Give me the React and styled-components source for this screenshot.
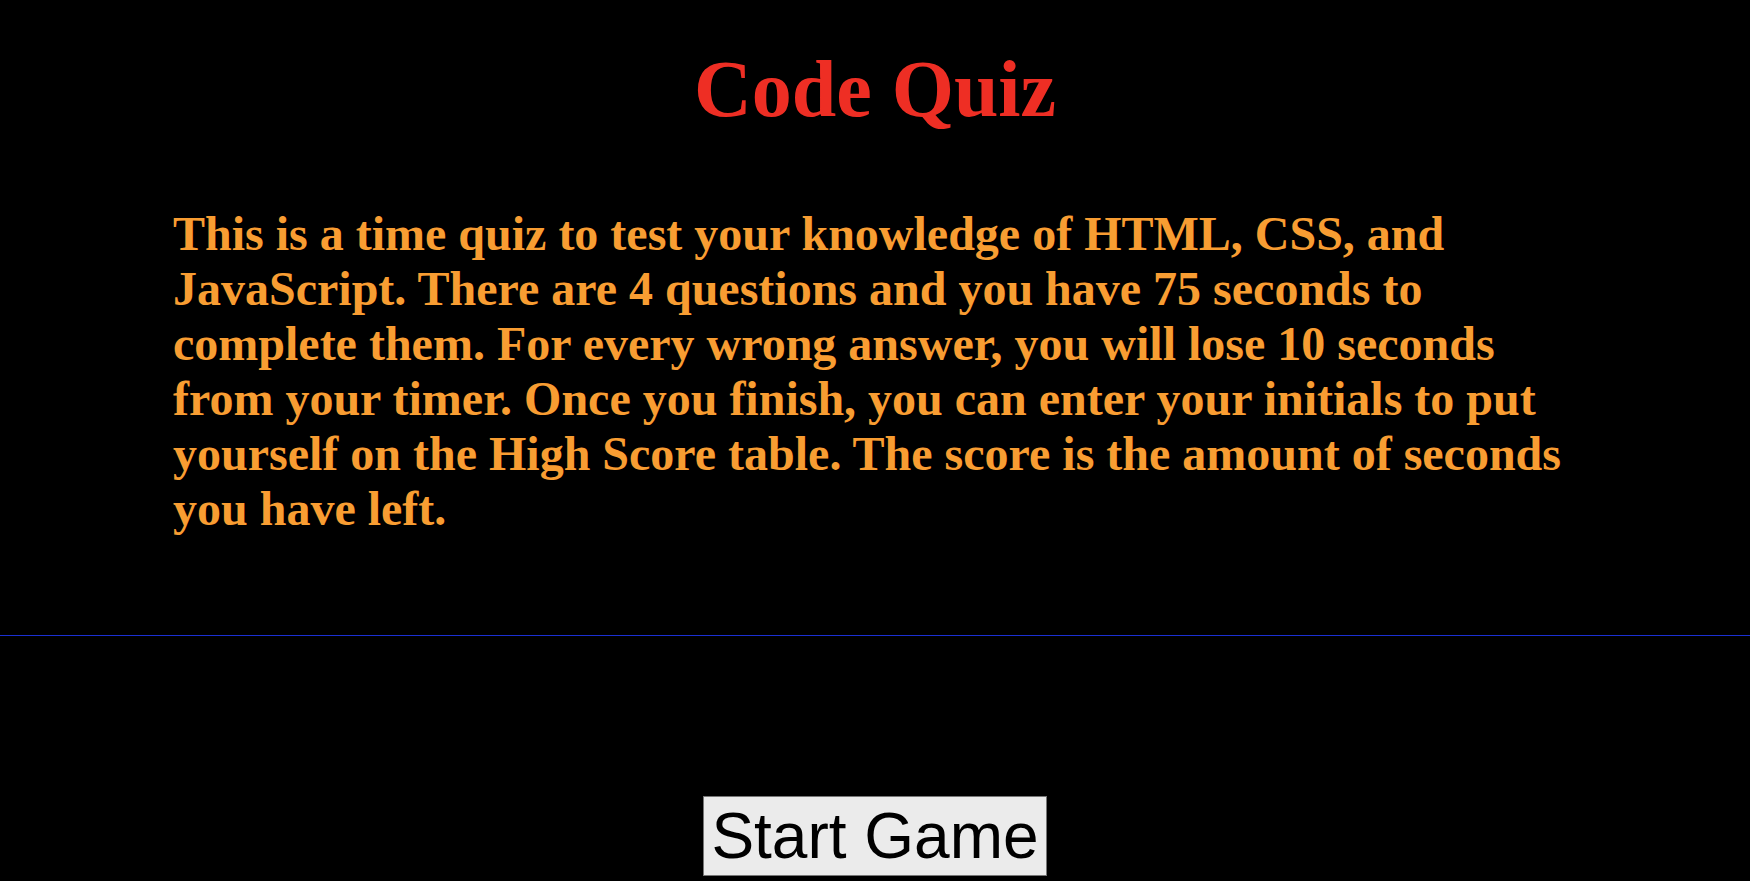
import React from 'react';
import styled, { createGlobalStyle } from 'styled-components';

const GlobalStyle = createGlobalStyle`
  html,
  body {
    margin: 0;
    padding: 0;
    background: #000;
  }

  body {
    font-family: 'Liberation Serif', 'Times New Roman', serif;
  }
`;

// Styled components
const Page = styled.div`
  min-height: 881px;
  background: #000;
  display: flex;
  flex-direction: column;
`;

const Intro = styled.header`
  border-bottom: 1px solid #1b30d2;
  padding: 44px 173px 99px;
  display: flex;
  flex-direction: column;
`;

const Title = styled.h1`
  margin: 0;
  color: #ee2e24;
  font-size: 80px;
  font-weight: 700;
  text-align: center;
`;

const Rules = styled.p`
  margin: 71px 0 0;
  color: #f89d32;
  font-size: 48px;
  font-weight: 700;
  line-height: 55px;
`;

const Actions = styled.main`
  display: flex;
  justify-content: center;
  padding-top: 160px;
`;

const StartButton = styled.button`
  font-family: 'Liberation Sans', Arial, sans-serif;
  font-size: 64px;
  line-height: normal;
  color: #000;
  background: #ebebeb;
  border: 1px solid #767676;
  border-radius: 0;
  padding: 2px 7px;
  cursor: pointer;

  &:hover {
    background: #e0e0e0;
  }
`;

export default function App() {
  return (
    <Page>
      <GlobalStyle />
      <Intro>
        <Title>Code Quiz</Title>
        <Rules>
          This is a time quiz to test your knowledge of HTML, CSS, and
          JavaScript. There are 4 questions and you have 75 seconds to
          complete them. For every wrong answer, you will lose 10 seconds
          from your timer. Once you finish, you can enter your initials to put
          yourself on the High Score table. The score is the amount of seconds
          you have left.
        </Rules>
      </Intro>
      <Actions>
        <StartButton type="button">Start Game</StartButton>
      </Actions>
    </Page>
  );
}
